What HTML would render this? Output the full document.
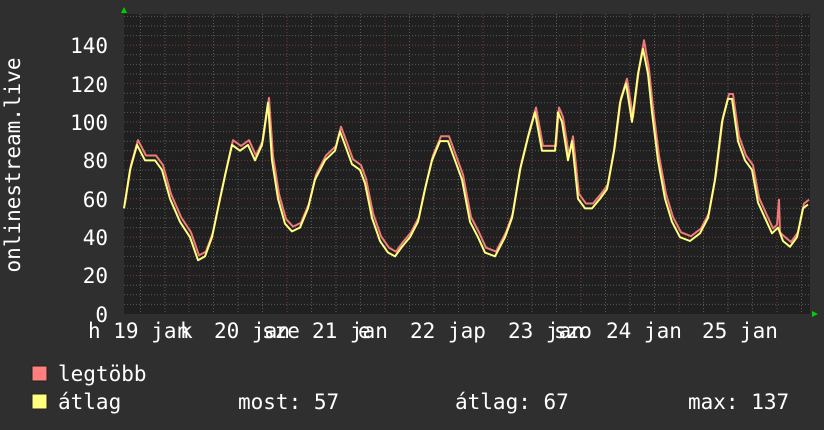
<!DOCTYPE html>
<html><head><meta charset="utf-8"><style>
html,body{margin:0;padding:0;background:#2f2f2f;width:824px;height:430px;overflow:hidden}
svg{display:block}
text{font-family:"DejaVu Sans Mono","Liberation Mono",monospace;font-size:21px;fill:#fff}
</style></head><body>
<svg width="824" height="430" xmlns="http://www.w3.org/2000/svg">
<rect width="824" height="430" fill="#2f2f2f"/>
<rect x="124" y="14" width="686" height="300" fill="#202020"/>
<g stroke="#5a5a5a" stroke-width="1" stroke-dasharray="1,2">
<path d="M124 304.4H810M124 294.8H810M124 285.2H810M124 266H810M124 256.4H810M124 246.8H810M124 227.6H810M124 218H810M124 208.4H810M124 189.2H810M124 179.6H810M124 170H810M124 150.8H810M124 141.2H810M124 131.6H810M124 112.4H810M124 102.8H810M124 93.2H810M124 74H810M124 64.4H810M124 54.8H810M124 35.6H810M124 26H810M124 16.4H810"/>
<path d="M140.5 14V314M165 14V314M213.5 14V314M238 14V314M262.5 14V314M311.5 14V314M336 14V314M360.5 14V314M409.5 14V314M434 14V314M458.5 14V314M507.5 14V314M532 14V314M556.5 14V314M605.5 14V314M630 14V314M654.5 14V314M703.5 14V314M728 14V314M752.5 14V314M801.5 14V314"/>
</g>
<g stroke="#7a3a3a" stroke-width="1" stroke-dasharray="1,2">
<path d="M124 275.6H810M124 237.2H810M124 198.8H810M124 160.4H810M124 122H810M124 83.6H810M124 45.2H810"/>
<path d="M189 14V314M287 14V314M385 14V314M483 14V314M581 14V314M679 14V314M777 14V314"/>
</g>
<g transform="translate(0,314) scale(1,-1.921)" fill="none" stroke-width="2" stroke-linejoin="round">
<polyline transform="translate(1,2.5)" vector-effect="non-scaling-stroke" stroke="#f07a7a" points="124,55 130,75 137,88 145,80 155,80 162,75 170,60 180,48 190,40 198,28 205,30 212,40 218,55 225,72 232,88 240,85 248,88 255,80 262,88 268,110 272,80 278,60 285,47 292,43 300,45 308,55 315,70 325,80 335,85 340,95 345,88 352,78 360,75 365,68 372,50 380,38 388,32 395,30 402,35 410,40 418,48 425,65 432,80 440,90 448,90 455,80 462,70 470,48 478,40 485,32 495,30 505,40 512,50 520,75 528,92 535,105 542,85 548,85 555,85 558,105 562,100 568,80 572,90 578,60 585,55 592,55 600,60 607,65 614,85 620,110 626,120 632,100 638,125 643,140 648,125 652,105 658,80 665,60 672,48 680,40 690,38 700,42 708,50 715,70 722,100 728,112 732,112 738,90 745,80 752,75 758,58 765,50 772,42 776,44 778,57 779,40 783,38 790,35 797,40 803,55 808,57"/>
<polyline vector-effect="non-scaling-stroke" stroke="#ffff80" points="124,55 130,75 137,88 145,80 155,80 162,75 170,60 180,48 190,40 198,28 205,30 212,40 218,55 225,72 232,88 240,85 248,88 255,80 262,88 268,110 272,80 278,60 285,47 292,43 300,45 308,55 315,70 325,80 335,85 340,95 345,88 352,78 360,75 365,68 372,50 380,38 388,32 395,30 402,35 410,40 418,48 425,65 432,80 440,90 448,90 455,80 462,70 470,48 478,40 485,32 495,30 505,40 512,50 520,75 528,92 535,105 542,85 548,85 555,85 558,105 562,100 568,80 572,90 578,60 585,55 592,55 600,60 607,65 614,85 620,110 626,120 632,100 638,125 643,138 648,125 652,105 658,80 665,60 672,48 680,40 690,38 700,42 708,50 715,70 722,100 728,112 732,112 738,90 745,80 752,75 758,58 765,50 772,42 778,45 783,38 790,35 797,40 803,55 808,57"/>
</g>
<polygon points="121,13 127,13 124,7" fill="#00d000"/>
<polygon points="812,311 812,317 818,314" fill="#00d000"/>
<g text-anchor="end">
<text x="108" y="322">0</text><text x="108" y="283">20</text><text x="108" y="245">40</text><text x="108" y="207">60</text><text x="108" y="168">80</text><text x="108" y="130">100</text><text x="108" y="92">120</text><text x="108" y="53">140</text>
</g>
<text transform="translate(20,165) rotate(-90)" text-anchor="middle">onlinestream.live</text>
<g>
<text x="88" y="338">h 19 jan</text><text x="180" y="338">k</text>
<text x="214" y="338">20 jan</text><text x="262" y="338">sze</text>
<text x="312" y="338">21 jan</text><text x="358" y="338">e</text>
<text x="410" y="338">22 jap</text>
<text x="508" y="338">23 jan</text><text x="554" y="338">szo</text>
<text x="606" y="338">24 jan</text>
<text x="702" y="338">25 jan</text>
</g>
<rect x="32" y="366" width="15" height="15" fill="#ff7f7f" stroke="#222"/>
<rect x="32" y="394" width="15" height="15" fill="#ffff7f" stroke="#222"/>
<text x="58" y="381">legtöbb</text>
<text x="58" y="409">átlag</text>
<text x="238" y="409">most: 57</text>
<text x="455" y="409">átlag: 67</text>
<text x="688" y="409">max: 137</text>
</svg>
</body></html>
